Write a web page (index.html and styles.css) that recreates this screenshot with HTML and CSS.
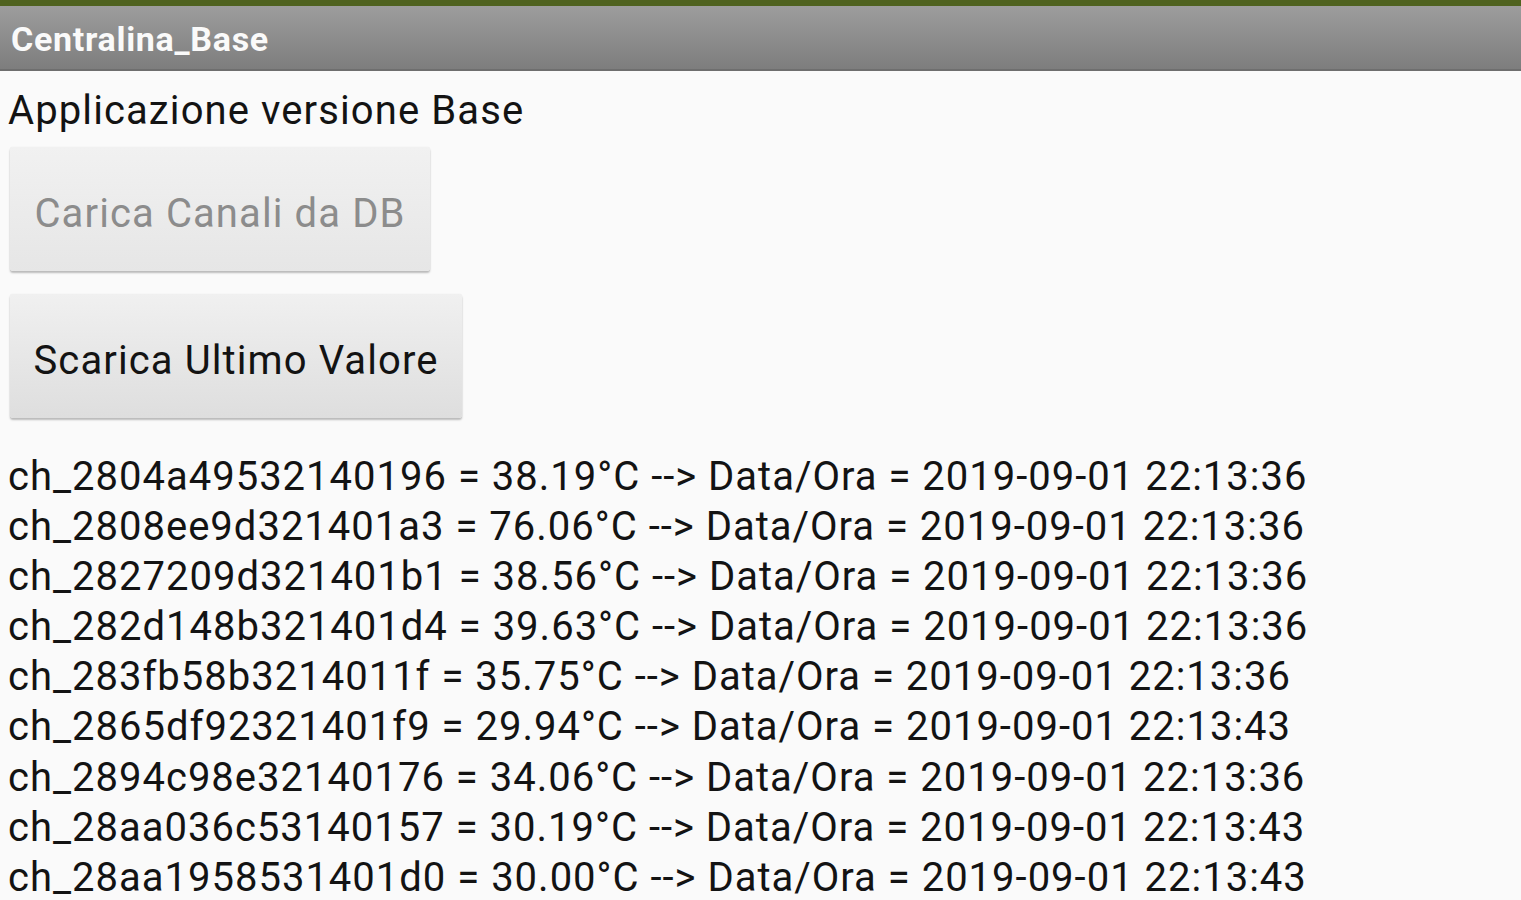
FILE: index.html
```html
<!DOCTYPE html>
<html>
<head>
<meta charset="utf-8">
<link rel="stylesheet" href="styles.css">
</head>
<body>
<div class="statusbar"></div>
<header class="titlebar"><span class="title">Centralina_Base</span></header>
<main class="content">
  <div class="subtitle">Applicazione versione Base</div>
  <button class="btn btn-disabled">Carica Canali da DB</button>
  <button class="btn btn-main">Scarica Ultimo Valore</button>
  <div class="list">
    <div class="row">ch_2804a49532140196 = 38.19°C --&gt; Data/Ora = 2019-09-01 22:13:36</div>
    <div class="row">ch_2808ee9d321401a3 = 76.06°C --&gt; Data/Ora = 2019-09-01 22:13:36</div>
    <div class="row">ch_2827209d321401b1 = 38.56°C --&gt; Data/Ora = 2019-09-01 22:13:36</div>
    <div class="row">ch_282d148b321401d4 = 39.63°C --&gt; Data/Ora = 2019-09-01 22:13:36</div>
    <div class="row">ch_283fb58b3214011f = 35.75°C --&gt; Data/Ora = 2019-09-01 22:13:36</div>
    <div class="row">ch_2865df92321401f9 = 29.94°C --&gt; Data/Ora = 2019-09-01 22:13:43</div>
    <div class="row">ch_2894c98e32140176 = 34.06°C --&gt; Data/Ora = 2019-09-01 22:13:36</div>
    <div class="row">ch_28aa036c53140157 = 30.19°C --&gt; Data/Ora = 2019-09-01 22:13:43</div>
    <div class="row">ch_28aa1958531401d0 = 30.00°C --&gt; Data/Ora = 2019-09-01 22:13:43</div>
  </div>
</main>
</body>
</html>
```
FILE: styles.css
```css
html, body {
  margin: 0;
  padding: 0;
  height: 100%;
  overflow: hidden;
}
body {
  background: #fafafa;
  font-family: Roboto, "Liberation Sans", sans-serif;
  color: #131313;
}
.statusbar {
  height: 6px;
  background: #4f621f;
}
.titlebar {
  height: 63px;
  background: linear-gradient(#9d9d9d, #7d7d7d);
  border-bottom: 2px solid #6e6e6e;
  display: flex;
  align-items: center;
  padding-left: 11px;
  box-sizing: content-box;
}
.title {
  color: #fafafa;
  font-weight: 700;
  font-size: 34px;
  letter-spacing: 0.7px;
  margin-top: 2px;
}
.content {
  padding: 0 8px;
  display: flex;
  flex-direction: column;
  align-items: flex-start;
}
.subtitle {
  font-size: 40px;
  line-height: 50px;
  margin-top: 15px;
  letter-spacing: 1.1px;
  color: #131313;
}
.btn {
  font-family: Roboto, "Liberation Sans", sans-serif;
  font-size: 40px;
  letter-spacing: 1.1px;
  border: none;
  border-radius: 3px;
  background: linear-gradient(#f0f0f0, #dedede);
  box-shadow: 0 2px 2px rgba(0,0,0,0.25), 0 0 1px rgba(0,0,0,0.15);
  padding: 8px 0 0 0;
  height: 124px;
  margin-left: 2px;
}
.btn-disabled {
  color: #8c8c8c;
  margin-top: 11px;
  width: 420px;
  background: linear-gradient(#f1f1f1, #e6e6e6);
}
.btn-main {
  color: #131313;
  margin-top: 23px;
  width: 452px;
}
.list {
  margin-top: 34px;
}
.row {
  font-size: 40px;
  line-height: 50.1px;
  letter-spacing: 1px;
  white-space: nowrap;
  color: #131313;
}
```
